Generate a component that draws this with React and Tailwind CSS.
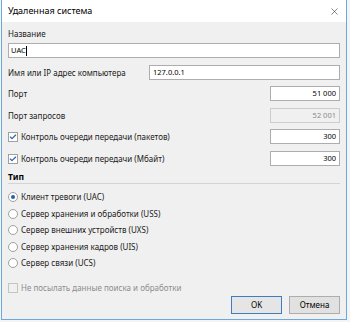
import { Check, X } from "lucide-react"

const font = { fontFamily: "'Noto Sans', 'Open Sans', sans-serif" }

const Field = ({ value, disabled, className = "" }) => (
  <div
    className={`h-[15px] border flex items-center justify-end pr-[3px] text-[7.5px] ${
      disabled ? "border-[#cccccc] bg-[#f0f0f0] text-[#8a8a8a]" : "border-[#adadad] bg-white text-black"
    } ${className}`}
  >
    {value}
  </div>
)

const CheckBox = ({ checked, disabled }) => (
  <div
    className={`w-[10px] h-[10px] border flex items-center justify-center ${
      disabled ? "border-[#c4c4c4] bg-[#f0f0f0]" : "border-[#a0a0a0] bg-white"
    }`}
  >
    {checked && <Check size={8} strokeWidth={3.5} className="text-[#2a5fae]" />}
  </div>
)

const Radio = ({ checked }) => (
  <div className="w-[10px] h-[10px] rounded-full border border-[#a0a0a0] bg-white flex items-center justify-center">
    {checked && <div className="w-[4px] h-[4px] rounded-full bg-[#2a5fae]" />}
  </div>
)

const types = [
  { label: "Клиент тревоги (UAC)", checked: true },
  { label: "Сервер хранения и обработки (USS)" },
  { label: "Сервер внешних устройств (UXS)" },
  { label: "Сервер хранения кадров (UIS)" },
  { label: "Сервер связи (UCS)" },
]

export default function App() {
  return (
    <div className="w-[350px] h-[322px] bg-[#f4f4f4] pl-[1px] text-[8px] text-[#1a1a1a]" style={font}>
      <div className="w-[346px] h-[320px] border-x border-b border-[#6aa8e0] flex flex-col">
        {/* title bar */}
        <div className="h-[22px] bg-white flex items-center justify-between pl-[6px] pr-[6px] shrink-0">
          <span className="text-[9px] text-black">Удаленная система</span>
          <X size={11} strokeWidth={1.3} className="text-[#333]" />
        </div>

        <div className="flex-1 bg-[#f0f0f0] pl-[6px] pr-[6px] flex flex-col">
          <div className="mt-[5px] h-[14px] flex items-center">Название</div>
          <div className="mt-[2px] h-[15px] border border-[#adadad] bg-white flex items-center pl-[2px] text-[7.5px] text-black">
            UAC<span className="w-px h-[10px] bg-black" />
          </div>

          <div className="mt-[7px] flex items-center justify-between">
            <span>Имя или IP адрес компьютера</span>
            <div className="w-[191px] h-[15px] border border-[#adadad] bg-white flex items-center pl-[3px] text-[7.5px] text-black">
              127.0.0.1
            </div>
          </div>

          <div className="mt-[6px] flex items-center justify-between">
            <span>Порт</span>
            <Field value="51 000" className="w-[70px]" />
          </div>

          <div className="mt-[7px] flex items-center justify-between">
            <span>Порт запросов</span>
            <Field value="52 001" disabled className="w-[70px]" />
          </div>

          <div className="mt-[6px] flex items-center justify-between">
            <div className="flex items-center gap-[3px]">
              <CheckBox checked />
              <span>Контроль очереди передачи (пакетов)</span>
            </div>
            <Field value="300" className="w-[70px]" />
          </div>

          <div className="mt-[7px] flex items-center justify-between">
            <div className="flex items-center gap-[3px]">
              <CheckBox checked />
              <span>Контроль очереди передачи (Мбайт)</span>
            </div>
            <Field value="300" className="w-[70px]" />
          </div>

          <div className="mt-[5px] h-[13px] border-b border-[#d4d4d4] flex items-center font-bold text-[8.5px] text-black">
            Тип
          </div>

          <div className="mt-[5px] flex flex-col">
            {types.map((t) => (
              <div key={t.label} className="h-[16.5px] flex items-center gap-[3px]">
                <Radio checked={t.checked} />
                <span>{t.label}</span>
              </div>
            ))}
          </div>

          <div className="mt-[9px] h-[15px] flex items-center gap-[3px] text-[#8d8d8d]">
            <CheckBox disabled />
            <span>Не посылать данные поиска и обработки</span>
          </div>

          <div className="mt-0 flex justify-end gap-[7px]">
            <button className="w-[51px] h-[18px] border border-[#3c7fc0] bg-[#e5e5e5] text-black text-[8px]">OK</button>
            <button className="w-[51px] h-[18px] border border-[#adadad] bg-[#e1e1e1] text-black text-[8px]">Отмена</button>
          </div>
        </div>
      </div>
    </div>
  )
}
